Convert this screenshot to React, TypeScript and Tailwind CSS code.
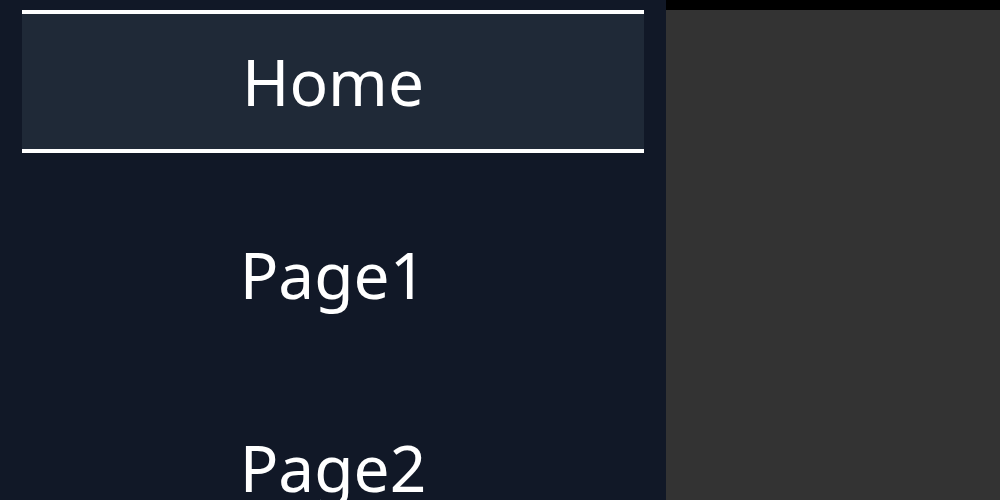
const items = ['Home', 'Page1', 'Page2']

export default function App() {
  const active = 'Home'

  return (
    <div className="flex h-[500px] w-[1000px] overflow-hidden" style={{ fontFamily: '"Noto Sans", "Open Sans", sans-serif' }}>
      <nav className="flex w-[666px] shrink-0 flex-col gap-[50px] bg-[#111827] px-[22px] pt-[10px]">
        {items.map((name) => (
          <a
            key={name}
            href="#"
            className={`flex h-[143px] shrink-0 items-center justify-center border-y-4 text-[64px] leading-none text-white ${
              name === active ? 'border-white bg-[#1f2937]' : 'border-transparent'
            }`}
          >
            {name}
          </a>
        ))}
      </nav>
      <main className="flex flex-1 flex-col">
        <div className="h-[10px] bg-black" />
        <div className="flex-1 bg-[#333333]" />
      </main>
    </div>
  )
}
